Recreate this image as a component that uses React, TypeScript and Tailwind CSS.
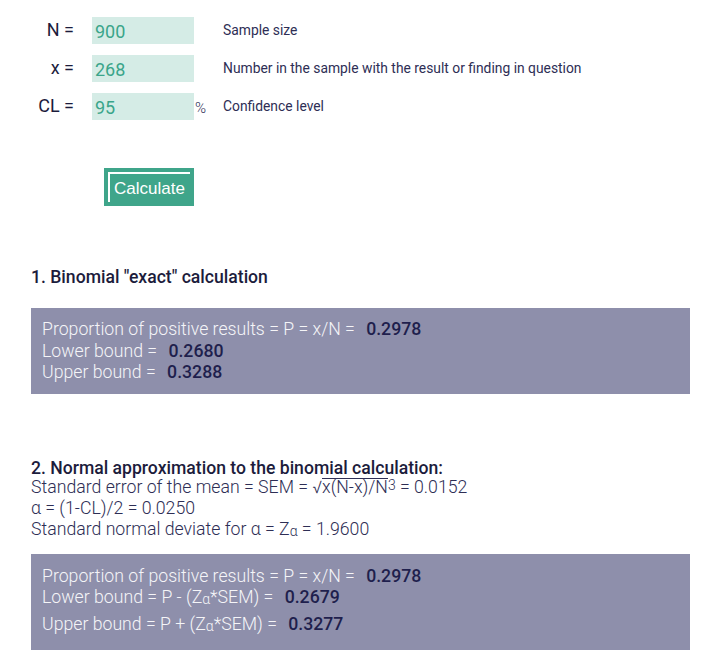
import React from "react";

const inputCls =
  "w-[102px] h-[27px] bg-[#d5ece6] text-[#3aa58a] text-[18px] font-normal leading-[27px] pl-[3px] pt-[1px]";

function Row({ label, value, pct, desc }: { label: string; value: string; pct?: boolean; desc: string }) {
  return (
    <div className="flex items-center h-[27px]">
      <div className="w-[74px] text-right text-[18px] font-normal text-[#1c1c3c] -mt-[3px]">{label}</div>
      <div className={"ml-[18px] " + inputCls}>{value}</div>
      <div className="w-[29px] text-[15px] text-[#2e2e55] pl-[1px] pt-[3px]">{pct ? "%" : ""}</div>
      <div className="text-[13.85px] text-[#2e2e55] font-normal">{desc}</div>
    </div>
  );
}

const Sub = () => <sub className="text-[14px] relative -bottom-[1px] align-baseline leading-none">α</sub>;

export default function App() {
  return (
    <div className="w-[702px] h-[657px] bg-white font-['Roboto',sans-serif] font-light relative overflow-hidden">
      <div className="pt-[17px] flex flex-col gap-[11px]">
        <Row label="N =" value="900" desc="Sample size" />
        <Row label="x =" value="268" desc="Number in the sample with the result or finding in question" />
        <Row label="CL =" value="95" pct desc="Confidence level" />
      </div>
      <div className="mt-[48px] ml-[104px]">
        <button className="w-[90px] h-[38px] bg-[#3fa58a] p-[4px] block">
          <span className="flex h-full border-t-2 border-l-2 border-white text-white text-[17px] font-['Liberation_Sans',Arial,sans-serif] font-normal items-center pl-[4px] pt-[1px]">
            Calculate
          </span>
        </button>
      </div>

      <div className="ml-[31px] mt-[61px] text-[17.6px] font-medium text-[#1c1c3c] leading-[20px]">
        1. Binomial "exact" calculation
      </div>

      <div className="ml-[31px] mt-[21px] w-[659px] h-[86px] bg-[#8e8fab] pl-[11px] pt-[11px] text-[17.7px] text-[#f5f5f8] leading-[21.5px]">
        <div>
          Proportion of positive results = P = x/N = <span className="ml-[7px] font-medium text-[#1f1f4d]">0.2978</span>
        </div>
        <div>
          Lower bound = <span className="ml-[7px] font-medium text-[#1f1f4d]">0.2680</span>
        </div>
        <div>
          Upper bound = <span className="ml-[7px] font-medium text-[#1f1f4d]">0.3288</span>
        </div>
      </div>

      <div className="ml-[31px] mt-[65px] text-[17.6px] font-medium text-[#1c1c3c] leading-[18px]">
        2. Normal approximation to the binomial calculation:
      </div>

      <div className="ml-[31px] mt-0 text-[17.7px] text-[#2e2e55] leading-[21px]">
        <div>
          Standard error of the mean = SEM = √<span className="inline-block border-t border-[#2e2e55] leading-[17px]">x(N-x)/N</span><sup className="text-[14px] relative -top-[3px] align-baseline">3</sup> = 0.0152
        </div>
        <div>α = (1-CL)/2 = 0.0250</div>
        <div>
          Standard normal deviate for α = Z<Sub /> = 1.9600
        </div>
      </div>

      <div className="ml-[31px] mt-[14px] w-[659px] h-[96px] bg-[#8e8fab] pl-[11px] pt-[12px] text-[17.7px] text-[#f5f5f8]">
        <div className="leading-[21px]">
          Proportion of positive results = P = x/N = <span className="ml-[7px] font-medium text-[#1f1f4d]">0.2978</span>
        </div>
        <div className="leading-[21px]">
          Lower bound = P - (Z<Sub />*SEM) = <span className="ml-[7px] font-medium text-[#1f1f4d]">0.2679</span>
        </div>
        <div className="leading-[21px] mt-[6px]">
          Upper bound = P + (Z<Sub />*SEM) = <span className="ml-[7px] font-medium text-[#1f1f4d]">0.3277</span>
        </div>
      </div>
    </div>
  );
}
